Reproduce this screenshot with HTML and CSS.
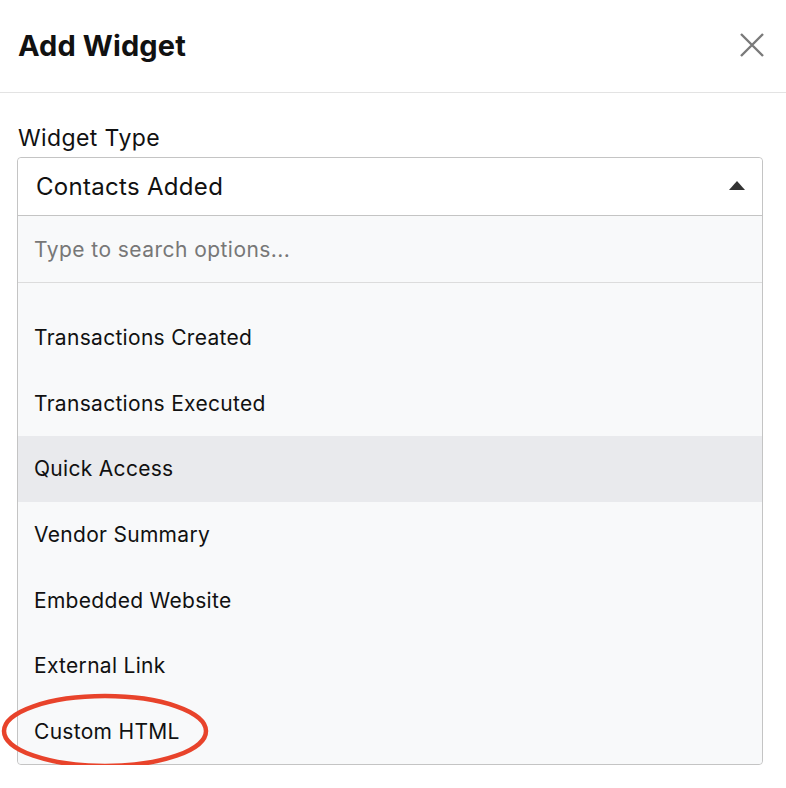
FILE: index.html
```html
<!DOCTYPE html>
<html>
<head>
<meta charset="utf-8">
<link rel="stylesheet" href="styles.css">
</head>
<body>
<div class="modal">
  <header class="modal-header">
    <h1 class="title">Add Widget</h1>
    <button class="close" aria-label="Close">
      <svg width="26" height="26" viewBox="0 0 26 26"><path d="M2 2 L24 24 M24 2 L2 24" stroke="#7a7a7a" stroke-width="2.4" fill="none"/></svg>
    </button>
  </header>
  <div class="modal-body">
    <label class="label">Widget Type</label>
    <div class="select">
      <div class="select-control">
        <span class="value">Contacts Added</span>
        <svg class="caret" width="16" height="9" viewBox="0 0 16 9"><path d="M0 9 L8 0 L16 9 Z" fill="#333"/></svg>
      </div>
      <div class="dropdown">
        <div class="search">Type to search options...</div>
        <ul class="options">
          <li class="option">Transactions Created</li>
          <li class="option">Transactions Executed</li>
          <li class="option active">Quick Access</li>
          <li class="option">Vendor Summary</li>
          <li class="option">Embedded Website</li>
          <li class="option">External Link</li>
          <li class="option annotated">Custom HTML
            <svg class="ring" width="210" height="80" viewBox="0 0 210 80"><ellipse cx="105" cy="40" rx="101" ry="35" fill="none" stroke="#e8432b" stroke-width="4.5"/></svg>
          </li>
        </ul>
      </div>
    </div>
  </div>
</div>
</body>
</html>
```
FILE: styles.css
```css
* { box-sizing: border-box; }
html, body { margin: 0; padding: 0; background: #fff; }
body { font-family: Inter, "Liberation Sans", Arial, sans-serif; color: #111; }
.modal-header {
  height: 93px;
  border-bottom: 1px solid #e3e3e3;
  display: flex;
  align-items: center;
  justify-content: space-between;
  padding: 0 21px 2px 18px;
}
.title { margin: 0; font-size: 29px; font-weight: 700; letter-spacing: 0.1px; color: #111; }
.close { border: 0; background: none; padding: 0; display: flex; }
.modal-body { padding: 31px 23px 0 17px; }
.label { display: block; font-size: 23px; letter-spacing: 0.4px; margin: 0 0 5px 1px; color: #111; }
.select { border: 1px solid #c4c4c4; border-radius: 4px; }
.select-control {
  height: 58px; display: flex; align-items: center; justify-content: space-between;
  padding: 0 17px 0 18px; border-bottom: 1px solid #c4c4c4; background: #fff; border-radius: 4px 4px 0 0;
}
.value { font-size: 24px; letter-spacing: 0.3px; color: #111; }
.caret { margin-top: -2px; }
.dropdown { background: #f8f9fa; border-radius: 0 0 4px 4px; }
.search {
  height: 67px; display: flex; align-items: center; padding: 0 16px;
  font-size: 21px; letter-spacing: 0.45px; color: #777; border-bottom: 1px solid #dcdcdc;
}
.options { list-style: none; margin: 0; padding: 22px 0 0 0; }
.option { height: 65.6px; display: flex; align-items: center; padding: 0 16px; font-size: 21px; letter-spacing: 0.3px; color: #111; position: relative; }
.option.active { background: #e9eaed; }
.ring { position: absolute; left: -18px; top: -8px; pointer-events: none; }
```
